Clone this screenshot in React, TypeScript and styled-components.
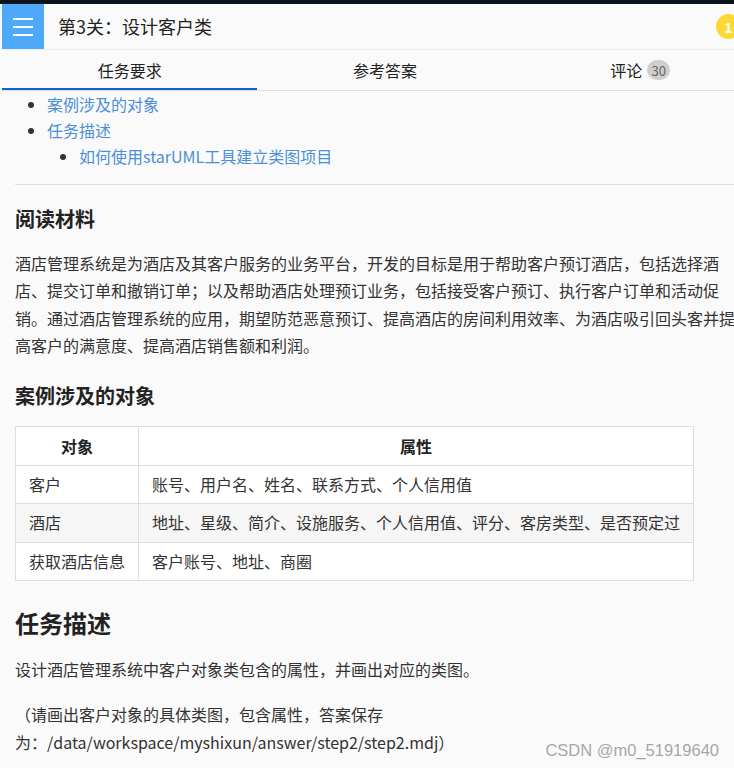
import React from "react";
import styled, { createGlobalStyle } from "styled-components";

const Global = createGlobalStyle`
  html, body {
    margin: 0;
    padding: 0;
    background: #fafafa;
    overflow: hidden;
  }
  body {
    font-family: "Noto Sans CJK SC", "Noto Sans", sans-serif;
    color: #333;
  }
`;

const Page = styled.div`
  position: relative;
  width: 734px;
  height: 768px;
  overflow: hidden;
  background: #fafafa;
`;

const TopStrip = styled.div`
  height: 4px;
  background: #0a121c;
`;

const Frame = styled.div`
  width: 766px;
  margin-left: 2px;
`;

const Header = styled.header`
  display: flex;
  align-items: center;
  height: 45px;
  border-bottom: 1px solid #ececec;
  background: #fafafa;
`;

const MenuButton = styled.div`
  width: 42px;
  height: 45px;
  background: #4fa9f9;
  display: flex;
  flex-direction: column;
  justify-content: center;
  align-items: center;
  gap: 6px;
`;

const MenuLine = styled.span`
  display: block;
  width: 20px;
  height: 2px;
  background: #ffffff;
`;

const Title = styled.h1`
  flex: 1;
  margin: 0 0 0 14px;
  font-size: 18px;
  font-weight: 400;
  color: #222;
  line-height: 45px;
`;

const CoinBadge = styled.div`
  width: 25px;
  height: 25px;
  border-radius: 50%;
  background: #fdd835;
  color: #fff;
  font-size: 14px;
  font-weight: 700;
  display: flex;
  align-items: center;
  justify-content: center;
  margin-right: 27px;
`;

const TabBar = styled.nav`
  display: grid;
  grid-template-columns: repeat(3, 1fr);
  height: 40px;
  border-bottom: 1px solid #dedede;
`;

const Tab = styled.div<{ $active?: boolean }>`
  display: flex;
  align-items: center;
  justify-content: center;
  gap: 5px;
  font-size: 16px;
  color: #222;
  box-shadow: ${(p) => (p.$active ? "inset 0 -2px 0 #1061d4" : "none")};
`;

const CountPill = styled.span`
  display: inline-flex;
  align-items: center;
  justify-content: center;
  min-width: 23px;
  height: 20px;
  border-radius: 10px;
  background: #cfcfcf;
  color: #666;
  font-size: 13px;
  line-height: 1;
`;

const Content = styled.main`
  padding-left: 13px;
`;

const TocList = styled.ul<{ $nested?: boolean }>`
  margin: 0;
  padding-left: 32px;
  list-style: disc;
  font-size: 16px;
  line-height: 26px;
`;

const TocLink = styled.a`
  color: #4b8fd9;
  text-decoration: none;
`;

const Rule = styled.hr`
  margin: 15px 0 0;
  border: 0;
  border-top: 1px solid #e0e0e0;
`;

const Section = styled.section`
  width: 730px;
`;

const H3 = styled.h3<{ $top: number }>`
  margin: ${(p) => p.$top}px 0 0;
  font-size: 20px;
  font-weight: 700;
  line-height: 28px;
  color: #222;
`;

const H2 = styled.h2`
  margin: 25px 0 0;
  font-size: 24px;
  font-weight: 700;
  line-height: 34px;
  color: #222;
`;

const Para = styled.p<{ $top: number }>`
  margin: ${(p) => p.$top}px 0 0;
  font-size: 16px;
  line-height: 27.3px;
  color: #333;
`;

const Table = styled.table`
  margin-top: 16px;
  border-collapse: collapse;
  background: #fff;
  font-size: 16px;
`;

const Row = styled.tr<{ $striped?: boolean }>`
  background: ${(p) => (p.$striped ? "#f6f6f6" : "#fff")};
`;

const Th = styled.th`
  border: 1px solid #dddddd;
  padding: 7px 13px;
  line-height: 24px;
  font-weight: 700;
  color: #222;
  text-align: center;
`;

const Td = styled.td`
  border: 1px solid #dddddd;
  padding: 7px 13px;
  line-height: 23.3px;
  color: #333;
  text-align: left;
`;

const Watermark = styled.div`
  position: absolute;
  right: 15px;
  bottom: 8px;
  font-family: "Liberation Sans", Arial, sans-serif;
  font-size: 16.5px;
  color: #a6a6a6;
  text-shadow: 0 0 2px #fff;
`;

const rows = [
  { name: "客户", attrs: "账号、用户名、姓名、联系方式、个人信用值" },
  { name: "酒店", attrs: "地址、星级、简介、设施服务、个人信用值、评分、客房类型、是否预定过" },
  { name: "获取酒店信息", attrs: "客户账号、地址、商圈" },
];

export default function App() {
  return (
    <Page>
      <Global />
      <TopStrip />
      <Frame>
        <Header>
          <MenuButton>
            <MenuLine />
            <MenuLine />
            <MenuLine />
          </MenuButton>
          <Title>第3关：设计客户类</Title>
          <CoinBadge>1</CoinBadge>
        </Header>
        <TabBar>
          <Tab $active>任务要求</Tab>
          <Tab>参考答案</Tab>
          <Tab>
            评论<CountPill>30</CountPill>
          </Tab>
        </TabBar>
        <Content>
          <TocList>
            <li>
              <TocLink>案例涉及的对象</TocLink>
            </li>
            <li>
              <TocLink>任务描述</TocLink>
              <TocList $nested>
                <li>
                  <TocLink>如何使用starUML工具建立类图项目</TocLink>
                </li>
              </TocList>
            </li>
          </TocList>
          <Rule />
          <Section>
            <H3 $top={20}>阅读材料</H3>
            <Para $top={17}>
              酒店管理系统是为酒店及其客户服务的业务平台，开发的目标是用于帮助客户预订酒店，包括选择酒店、提交订单和撤销订单；以及帮助酒店处理预订业务，包括接受客户预订、执行客户订单和活动促销。通过酒店管理系统的应用，期望防范恶意预订、提高酒店的房间利用效率、为酒店吸引回头客并提高客户的满意度、提高酒店销售额和利润。
            </Para>
            <H3 $top={23}>案例涉及的对象</H3>
            <Table>
              <thead>
                <Row>
                  <Th>对象</Th>
                  <Th>属性</Th>
                </Row>
              </thead>
              <tbody>
                {rows.map((r, i) => (
                  <Row key={r.name} $striped={i === 1}>
                    <Td>{r.name}</Td>
                    <Td>{r.attrs}</Td>
                  </Row>
                ))}
              </tbody>
            </Table>
            <H2>任务描述</H2>
            <Para $top={16}>设计酒店管理系统中客户对象类包含的属性，并画出对应的类图。</Para>
            <Para $top={18}>
              （请画出客户对象的具体类图，包含属性，答案保存为：/data/workspace/myshixun/answer/step2/step2.mdj）
            </Para>
          </Section>
        </Content>
      </Frame>
      <Watermark>CSDN @m0_51919640</Watermark>
    </Page>
  );
}
